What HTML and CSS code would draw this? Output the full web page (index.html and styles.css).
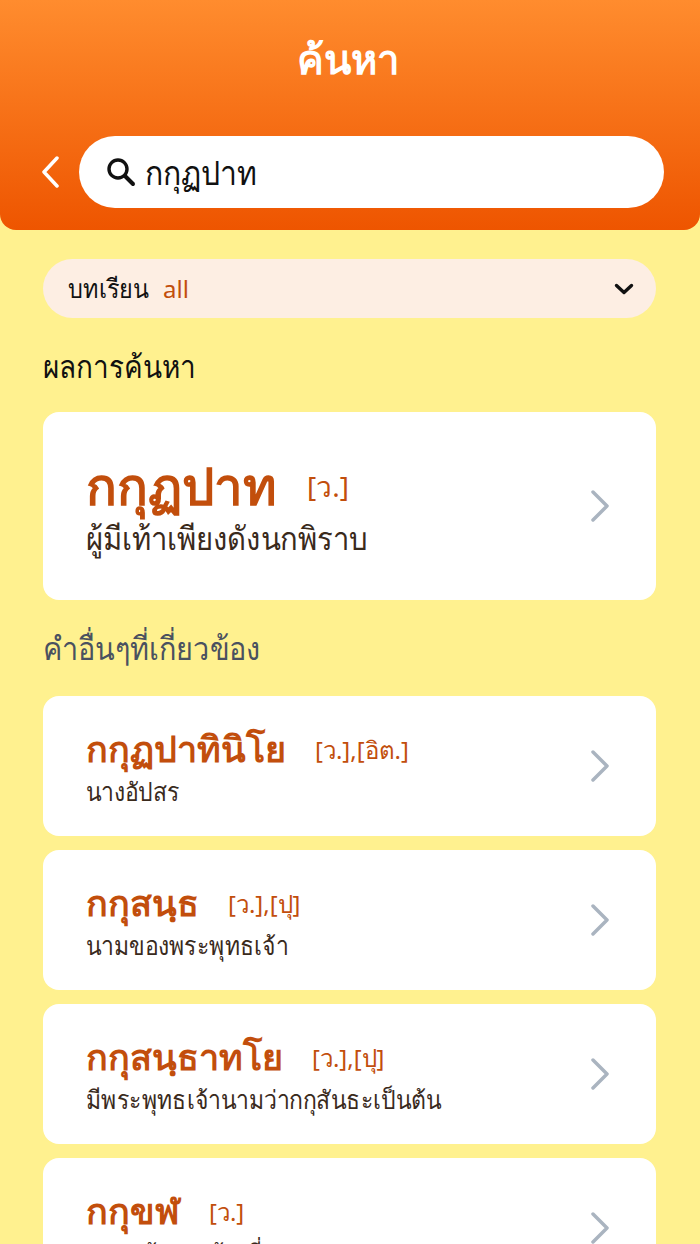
FILE: index.html
```html
<!DOCTYPE html>
<html lang="th">
<head>
  <meta charset="UTF-8">
  <meta name="viewport" content="width=device-width, initial-scale=1.0">
  <title>ค้นหา</title>
  <link rel="stylesheet" href="styles.css">
</head>
<body>
  <div class="page">
    <header class="header">
      <h1 class="header-title">ค้นหา</h1>
      <div class="search-row">
        <svg class="back-icon" width="20" height="32" viewBox="0 0 20 32"><path d="M17 2 L4 16 L17 30" fill="none" stroke="#fff" stroke-width="3.5" stroke-linecap="round" stroke-linejoin="round"/></svg>
        <div class="search-box">
          <svg class="search-icon" width="30" height="30" viewBox="0 0 30 30"><circle cx="12" cy="12" r="9" fill="none" stroke="#111" stroke-width="3.4"/><path d="M19 19 L27 27" stroke="#111" stroke-width="4" stroke-linecap="round"/></svg>
          <span class="search-text narrow">กกุฏปาท</span>
        </div>
      </div>
    </header>

    <main class="content">
      <div class="filter">
        <span class="filter-label narrow">บทเรียน</span>
        <span class="filter-value">all</span>
        <svg class="filter-arrow" width="20" height="12" viewBox="0 0 20 12"><path d="M2.5 2.5 L10 9.5 L17.5 2.5" fill="none" stroke="#111" stroke-width="3.4" stroke-linecap="round" stroke-linejoin="round"/></svg>
      </div>

      <h2 class="section-title"><span class="narrow">ผลการค้นหา</span></h2>
      <div class="card card-main">
        <div class="card-body">
          <div class="word-line"><span class="word word-big">กกุฏปาท</span><span class="tag tag-big">[ว.]</span></div>
          <div class="meaning meaning-big"><span class="narrow">ผู้มีเท้าเพียงดังนกพิราบ</span></div>
        </div>
        <svg class="chevron" width="20" height="32" viewBox="0 0 20 32"><path d="M3 2 L17 16 L3 30" fill="none" stroke="#aab4c0" stroke-width="3.5" stroke-linecap="round" stroke-linejoin="round"/></svg>
      </div>

      <h2 class="section-title section-muted"><span class="narrow">คำอื่นๆที่เกี่ยวข้อง</span></h2>
      <div class="card-list">
        <div class="card">
          <div class="card-body">
            <div class="word-line"><span class="word">กกุฏปาทินิโย</span><span class="tag">[ว.],[อิต.]</span></div>
            <div class="meaning"><span class="narrow">นางอัปสร</span></div>
          </div>
          <svg class="chevron" width="20" height="32" viewBox="0 0 20 32"><path d="M3 2 L17 16 L3 30" fill="none" stroke="#aab4c0" stroke-width="3.5" stroke-linecap="round" stroke-linejoin="round"/></svg>
        </div>
        <div class="card">
          <div class="card-body">
            <div class="word-line"><span class="word">กกุสนฺธ</span><span class="tag">[ว.],[ปุ]</span></div>
            <div class="meaning"><span class="narrow">นามของพระพุทธเจ้า</span></div>
          </div>
          <svg class="chevron" width="20" height="32" viewBox="0 0 20 32"><path d="M3 2 L17 16 L3 30" fill="none" stroke="#aab4c0" stroke-width="3.5" stroke-linecap="round" stroke-linejoin="round"/></svg>
        </div>
        <div class="card">
          <div class="card-body">
            <div class="word-line"><span class="word">กกุสนฺธาทโย</span><span class="tag">[ว.],[ปุ]</span></div>
            <div class="meaning"><span class="narrow">มีพระพุทธเจ้านามว่ากกุสันธะเป็นต้น</span></div>
          </div>
          <svg class="chevron" width="20" height="32" viewBox="0 0 20 32"><path d="M3 2 L17 16 L3 30" fill="none" stroke="#aab4c0" stroke-width="3.5" stroke-linecap="round" stroke-linejoin="round"/></svg>
        </div>
        <div class="card">
          <div class="card-body">
            <div class="word-line"><span class="word">กกุขฬ</span><span class="tag">[ว.]</span></div>
            <div class="meaning"><span class="narrow">หยาบช้ากระด้างที่</span></div>
          </div>
          <svg class="chevron" width="20" height="32" viewBox="0 0 20 32"><path d="M3 2 L17 16 L3 30" fill="none" stroke="#aab4c0" stroke-width="3.5" stroke-linecap="round" stroke-linejoin="round"/></svg>
        </div>
      </div>
    </main>
  </div>
</body>
</html>
```

FILE: styles.css
```css
html, body {
  margin: 0;
  padding: 0;
}
body {
  font-family: "Noto Sans", "DejaVu Sans", sans-serif;
  background-color: #fff18f;
  color: #222;
}
.page {
  height: 1244px;
  overflow: hidden;
}
.narrow {
  display: inline-block;
  transform: scaleX(0.9);
  transform-origin: left center;
}
.header {
  height: 230px;
  box-sizing: border-box;
  padding: 34px 36px 22px 40px;
  border-radius: 0 0 16px 16px;
  background: linear-gradient(180deg, #ff8c2e 0%, #ee5500 100%);
}
.header-title {
  margin: 0 0 50px;
  padding-right: 8px;
  height: 52px;
  line-height: 50px;
  text-align: center;
  font-size: 40px;
  font-weight: 700;
  color: #fff;
}
.search-row {
  display: flex;
  align-items: center;
  gap: 19px;
}
.search-box {
  flex: 1;
  height: 72px;
  display: flex;
  align-items: center;
  gap: 9px;
  padding-left: 27px;
  border-radius: 36px;
  background-color: #fff;
}
.search-text {
  margin-top: 2px;
  font-size: 33.5px;
  font-weight: 500;
  color: #111;
}
.content {
  padding: 29px 44px 0 43px;
}
.filter {
  height: 59px;
  display: flex;
  align-items: center;
  padding: 0 22px 0 25px;
  border-radius: 30px;
  background-color: #fdeee3;
  font-size: 24px;
}
.filter-label {
  color: #111;
  font-size: 26px;
  margin-right: 5px;
}
.filter-value {
  flex: 1;
  color: #c24e0c;
}
.section-title {
  margin: 26px 0 22px;
  height: 46px;
  line-height: 44px;
  font-size: 31px;
  font-weight: 400;
  color: #111;
}
.section-muted {
  color: #4a5160;
  margin: 26px 0 24px;
  font-size: 32px;
}
.card {
  height: 140px;
  box-sizing: border-box;
  display: flex;
  align-items: center;
  justify-content: space-between;
  padding: 0 46px 0 43px;
  border-radius: 16px;
  background-color: #fff;
}
.card-main {
  height: 188px;
}
.card-list {
  display: flex;
  flex-direction: column;
  gap: 14px;
}
.word-line {
  display: flex;
  align-items: center;
  gap: 29px;
}
.word {
  font-size: 36px;
  line-height: 50px;
  font-weight: 700;
  color: #c24e0c;
}
.word-big {
  font-size: 51px;
  line-height: 60px;
}
.tag {
  margin-top: 3px;
  font-size: 24px;
  color: #c24e0c;
}
.tag-big {
  margin-top: 4px;
  margin-left: 1px;
  font-size: 28px;
}
.meaning {
  font-size: 25.5px;
  line-height: 34px;
  color: #3a2a1c;
}
.meaning-big {
  padding-top: 3px;
  font-size: 32.5px;
  line-height: 40px;
}
```
